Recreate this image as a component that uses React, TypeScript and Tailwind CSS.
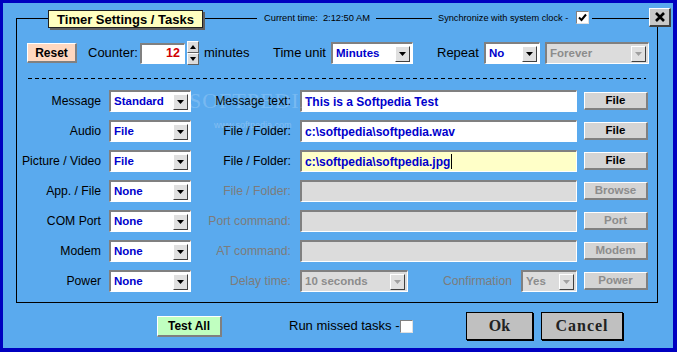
import React from "react";

const SANS = "font-['Liberation_Sans',Arial,sans-serif]";

function Arrow({ disabled }: { disabled?: boolean }) {
  return (
    <div className="ml-auto mr-[2px] w-[15px] h-[16px] bg-[#e0e0e0] border-t border-l border-t-white border-l-white border-b border-r border-b-[#404040] border-r-[#404040] flex items-center justify-center shrink-0">
      <svg width="7" height="4" viewBox="0 0 7 4">
        <path d="M0 0h7L3.5 4z" fill={disabled ? "#a0a0a0" : "#000"} />
      </svg>
    </div>
  );
}

function Sel({ w, text, disabled }: { w: string; text: string; disabled?: boolean }) {
  return (
    <div
      className={`${w} h-[22px] shrink-0 flex items-center border-t-2 border-l-2 border-t-[#808080] border-l-[#808080] border-b border-r border-b-white border-r-white ${
        disabled ? "bg-[#dcdcdc] text-[#8c8c8c]" : "bg-white text-[#0000cc]"
      }`}
    >
      <span className="pl-[3px] text-[11.5px] font-bold whitespace-nowrap">{text}</span>
      <Arrow disabled={disabled} />
    </div>
  );
}

function Field({ text, bg, cursor }: { text?: string; bg: string; cursor?: boolean }) {
  return (
    <div
      className={`ml-[9px] w-[277px] h-[22px] shrink-0 flex items-center border-t-2 border-l-2 border-t-[#808080] border-l-[#808080] border-b border-r border-b-white border-r-white ${bg} pl-[3px] text-[12px] font-bold text-[#0000cc] whitespace-nowrap`}
    >
      {text}
      {cursor && <span className="inline-block w-px h-[15px] bg-black ml-px" />}
    </div>
  );
}

function Btn({ text, disabled }: { text: string; disabled?: boolean }) {
  return (
    <div
      className={`ml-[7px] w-[64px] h-[18px] shrink-0 bg-[#d4d4d4] border-t border-l border-t-white border-l-white border-b-2 border-r-2 border-b-[#808080] border-r-[#808080] flex items-center justify-center text-[11.5px] font-bold ${
        disabled ? "text-[#8c8c8c]" : "text-black"
      }`}
    >
      {text}
    </div>
  );
}

function Label({ text, disabled, w }: { text: string; disabled?: boolean; w: string }) {
  return (
    <span
      className={`${w} shrink-0 text-right text-[12.2px] whitespace-nowrap ${
        disabled ? "text-[#7c7c7c]" : "text-black"
      }`}
    >
      {text}
    </span>
  );
}

function Row({
  label,
  sel,
  mid,
  midDisabled,
  field,
  btn,
}: {
  label: string;
  sel: string;
  mid: string;
  midDisabled?: boolean;
  field: React.ReactNode;
  btn: React.ReactNode;
}) {
  return (
    <div className="flex items-center h-[22px]">
      <Label text={label} w="w-[84px]" />
      <div className="ml-[8px]">
        <Sel w="w-[82px]" text={sel} />
      </div>
      <Label text={mid} w="w-[100px]" disabled={midDisabled} />
      {field}
      {btn}
    </div>
  );
}

function Check({ checked }: { checked?: boolean }) {
  return (
    <div className="w-[13px] h-[13px] shrink-0 bg-white border-t border-l border-t-[#808080] border-l-[#808080] border-b border-r border-b-[#e0e0e0] border-r-[#e0e0e0] flex items-center justify-center">
      {checked && (
        <svg width="9" height="9" viewBox="0 0 9 9">
          <path d="M1 4.5L3.5 7L8 1.5" stroke="#000" strokeWidth="2" fill="none" />
        </svg>
      )}
    </div>
  );
}

export default function App() {
  return (
    <div className={`w-[677px] h-[352px] bg-[#0000c0] pt-[3px] pl-[3px] pr-[4px] pb-[4px] ${SANS}`}>
      <div className="w-full h-full bg-[#5aaaee] flex flex-col">
        {/* group */}
        <div className="ml-[13px] mt-[5px] w-[653px] flex flex-col">
          {/* header */}
          <div className="h-[19px] flex items-start">
            <div className="w-[32px] h-[19px] flex flex-col shrink-0">
              <div className="h-[10px]" />
              <div className="flex-1 border-l border-t border-black" />
            </div>
            <div className="mt-[2px] w-[155px] h-[18px] shrink-0 bg-[#ffffc0] border border-[#202020] shadow-[2px_2px_0_#606060] flex items-center justify-center text-[13px] font-bold text-black leading-none z-10">
              Timer Settings / Tasks
            </div>
            <div className="mt-[10px] ml-[2px] w-[52px] h-px bg-black shrink-0" />
            <span className="mt-[4px] ml-[7px] w-[108px] shrink-0 text-[9.3px] leading-[12px] text-black whitespace-nowrap">
              Current time:&nbsp;&nbsp;2:12:50 AM
            </span>
            <div className="mt-[10px] ml-[4px] w-[56px] h-px bg-black shrink-0" />
            <span className="mt-[4px] ml-[6px] w-[130px] shrink-0 text-[9.2px] leading-[12px] text-black whitespace-nowrap">
              Synchronize with system clock -
            </span>
            <div className="mt-[3px] ml-[8px]">
              <Check checked />
            </div>
            <div className="mt-[10px] ml-[3px] w-[57px] h-px bg-black shrink-0" />
            <div className="w-[22px] h-[19px] shrink-0 bg-[#c8c8c8] border-t border-l border-t-white border-l-white border-b-2 border-r-2 border-b-[#404040] border-r-[#404040] flex items-center justify-center">
              <svg width="10" height="10" viewBox="0 0 10 10">
                <path d="M1 1L9 9M9 1L1 9" stroke="#000" strokeWidth="2.6" />
              </svg>
            </div>
          </div>

          {/* body */}
          <div className="relative w-[642px] h-[276px] border-l border-r border-b border-black flex flex-col">
            {/* watermark */}
            <div className="absolute left-[172px] top-[63px] flex flex-col items-center pointer-events-none">
              <span className="font-['Liberation_Serif',serif] text-[22px] leading-[22px] tracking-[1px] text-white/20">
                SOFTPEDIA
              </span>
              <span className="mt-[8px] text-[9px] leading-[10px] text-white/25">www.softpedia.com</span>
            </div>

            {/* row 1 */}
            <div className="mt-[14px] h-[24px] flex items-center">
              <div className="ml-[10px] w-[50px] h-[20px] shrink-0 bg-[#ffd8c0] border-t border-l border-t-white border-l-white border-b-2 border-r-2 border-b-[#808080] border-r-[#808080] flex items-center justify-center text-[12px] font-bold text-black">
                Reset
              </div>
              <span className="ml-[11px] w-[52px] shrink-0 text-[13px] text-black">Counter:</span>
              <div className="w-[45px] h-[21px] shrink-0 bg-white border-t-2 border-l-2 border-t-[#808080] border-l-[#808080] border-b border-r border-b-white border-r-white flex items-center justify-end pr-[4px] text-[12.5px] font-bold text-[#d00000]">
                12
              </div>
              <div className="ml-[2px] w-[12px] h-[24px] shrink-0 flex flex-col">
                <div className="h-[12px] bg-[#dcdcdc] border-t border-l border-t-white border-l-white border-b border-r border-b-[#606060] border-r-[#606060] flex items-center justify-center">
                  <svg width="6" height="4" viewBox="0 0 6 4">
                    <path d="M0 4h6L3 0z" fill="#000" />
                  </svg>
                </div>
                <div className="h-[12px] bg-[#dcdcdc] border-t border-l border-t-white border-l-white border-b border-r border-b-[#606060] border-r-[#606060] flex items-center justify-center">
                  <svg width="6" height="4" viewBox="0 0 6 4">
                    <path d="M0 0h6L3 4z" fill="#000" />
                  </svg>
                </div>
              </div>
              <span className="ml-[5px] w-[69px] shrink-0 text-[13px] text-black">minutes</span>
              <span className="w-[58px] shrink-0 text-[13px] text-black">Time unit</span>
              <Sel w="w-[82px]" text="Minutes" />
              <span className="ml-[24px] w-[47px] shrink-0 text-[13px] text-black">Repeat</span>
              <Sel w="w-[56px]" text="No" />
              <div className="ml-[5px]">
                <Sel w="w-[104px]" text="Forever" disabled />
              </div>
            </div>

            {/* dashed line */}
            <div className="mt-[13px] ml-[11px] w-[618px] h-px shrink-0 bg-[repeating-linear-gradient(to_right,#000_0_4px,transparent_4px_7px)]" />

            {/* rows */}
            <div className="mt-[11px] flex flex-col gap-[8px]">
              <Row
                label="Message"
                sel="Standard"
                mid="Message text:"
                field={<Field text="This is a Softpedia Test" bg="bg-white" />}
                btn={<Btn text="File" />}
              />
              <Row
                label="Audio"
                sel="File"
                mid="File / Folder:"
                field={<Field text="c:\softpedia\softpedia.wav" bg="bg-white" />}
                btn={<Btn text="File" />}
              />
              <Row
                label="Picture / Video"
                sel="File"
                mid="File / Folder:"
                field={<Field text="c:\softpedia\softpedia.jpg" bg="bg-[#ffffc8]" cursor />}
                btn={<Btn text="File" />}
              />
              <Row
                label="App. / File"
                sel="None"
                mid="File / Folder:"
                midDisabled
                field={<Field bg="bg-[#dcdcdc]" />}
                btn={<Btn text="Browse" disabled />}
              />
              <Row
                label="COM Port"
                sel="None"
                mid="Port command:"
                midDisabled
                field={<Field bg="bg-[#dcdcdc]" />}
                btn={<Btn text="Port" disabled />}
              />
              <Row
                label="Modem"
                sel="None"
                mid="AT command:"
                midDisabled
                field={<Field bg="bg-[#dcdcdc]" />}
                btn={<Btn text="Modem" disabled />}
              />
              <Row
                label="Power"
                sel="None"
                mid="Delay time:"
                midDisabled
                field={
                  <div className="ml-[9px] flex items-center">
                    <Sel w="w-[108px]" text="10  seconds" disabled />
                    <Label text="Confirmation" w="w-[104px]" disabled />
                    <div className="ml-[9px]">
                      <Sel w="w-[56px]" text="Yes" disabled />
                    </div>
                  </div>
                }
                btn={<Btn text="Power" disabled />}
              />
            </div>
          </div>
        </div>

        {/* bottom row */}
        <div className="mt-[9px] h-[28px] flex items-center">
          <div className="ml-[154px] w-[65px] h-[21px] shrink-0 bg-[#c0ffc0] border-t border-l border-t-white border-l-white border-b-2 border-r-2 border-b-[#808080] border-r-[#808080] flex items-center justify-center text-[12px] font-bold text-black">
            Test All
          </div>
          <span className="ml-[67px] w-[111px] shrink-0 text-[13px] text-black whitespace-nowrap">Run missed tasks -</span>
          <Check />
          <div className="ml-[53px] w-[67px] h-[28px] shrink-0 bg-[#c0c0c0] border border-black shadow-[1px_1px_0_#000] flex items-center justify-center font-['Liberation_Serif',serif] text-[16px] font-bold text-[#222]">
            Ok
          </div>
          <div className="ml-[8px] w-[82px] h-[28px] shrink-0 bg-[#c0c0c0] border border-black shadow-[1px_1px_0_#000] flex items-center justify-center font-['Liberation_Serif',serif] text-[16px] font-bold tracking-[1px] text-[#222]">
            Cancel
          </div>
        </div>
      </div>
    </div>
  );
}
